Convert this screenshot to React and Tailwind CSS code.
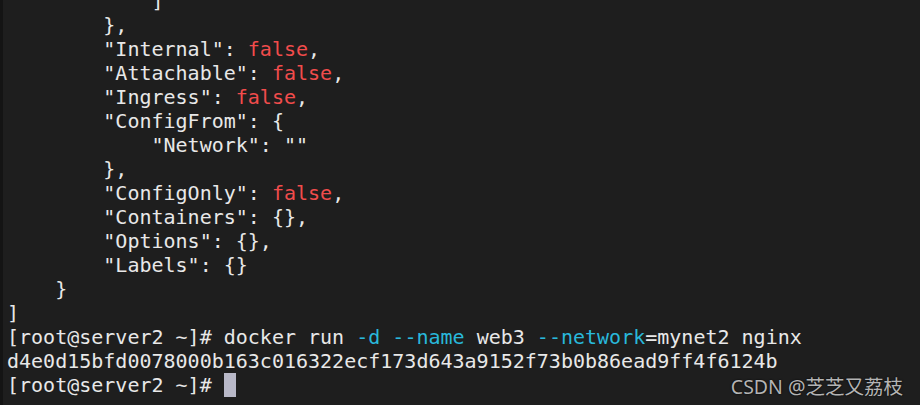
import React from "react";

const W = "text-[#e8e8e8]";
const R = "text-[#f14c4c]";
const C = "text-[#29b8db]";

const lines = [
  [["            ]", W]],
  [["        },", W]],
  [['        "Internal": ', W], ["false", R], [",", W]],
  [['        "Attachable": ', W], ["false", R], [",", W]],
  [['        "Ingress": ', W], ["false", R], [",", W]],
  [['        "ConfigFrom": {', W]],
  [['            "Network": ""', W]],
  [["        },", W]],
  [['        "ConfigOnly": ', W], ["false", R], [",", W]],
  [['        "Containers": {},', W]],
  [['        "Options": {},', W]],
  [['        "Labels": {}', W]],
  [["    }", W]],
  [["]", W]],
  [
    ["[root@server2 ~]# docker run ", W],
    ["-d", C],
    [" ", W],
    ["--name", C],
    [" web3 ", W],
    ["--network", C],
    ["=mynet2 nginx", W],
  ],
  [["d4e0d15bfd0078000b163c016322ecf173d643a9152f73b0b86ead9ff4f6124b", W]],
];

export default function App() {
  return (
    <div className="relative w-[920px] h-[405px] overflow-hidden bg-[#1e1e1e] flex">
      <div className="w-[3px] h-full bg-[#141414] shrink-0" />
      <div
        className="pl-[4px] mt-[-11px] text-[20px] leading-[24px] whitespace-pre"
        style={{ fontFamily: '"DejaVu Sans Mono", monospace' }}
      >
        {lines.map((segs, i) => (
          <div key={i} className="h-[24px]">
            {segs.map(([t, c], j) => (
              <span key={j} className={c}>
                {t}
              </span>
            ))}
          </div>
        ))}
        <div className="h-[24px] flex items-start">
          <span className={W}>{"[root@server2 ~]# "}</span>
          <span className="inline-block w-[12px] h-[24px] bg-[#b8b8c8]" />
        </div>
      </div>
      <div
        className="absolute right-[17px] bottom-[5px] text-[19.5px] leading-[26px] text-[#b4b4b4] [text-shadow:0_0_2px_#000]"
        style={{ fontFamily: '"Noto Sans", "Noto Sans CJK SC", sans-serif' }}
      >
        CSDN @芝芝又荔枝
      </div>
    </div>
  );
}
